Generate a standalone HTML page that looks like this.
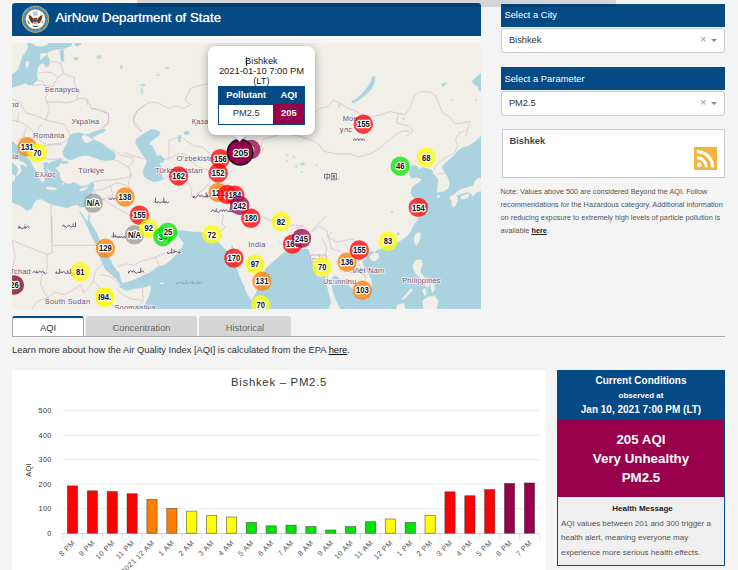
<!DOCTYPE html>
<html><head><meta charset="utf-8">
<style>
*{box-sizing:border-box;margin:0;padding:0}
html,body{width:738px;height:570px;overflow:hidden;background:#f4f4f4;font-family:"Liberation Sans",sans-serif;color:#333}
.abs{position:absolute}
#topbar{left:137px;top:0;width:479px;height:6.7px;background:rgba(0,0,0,.125);z-index:5}
#hdrwrap{left:12px;top:2px;width:469px;height:36px;background:#fff;border-radius:4px 4px 0 0}
#hdr{text-shadow:0 0 .7px rgba(255,255,255,.8);left:12px;top:3px;width:469px;height:33px;background:#044b85;border-radius:3px 3px 0 0;color:#fff;font-size:13.3px;line-height:29px;padding-left:43.5px;white-space:nowrap}
#map{left:12px;top:43px;width:469px;height:266px;background:#f2efe9;overflow:hidden}
.ml{font:bold 8.7px "Liberation Sans",sans-serif;text-anchor:middle;fill:#111;stroke:#fff;stroke-width:2.6px;stroke-linejoin:round;paint-order:stroke}
.lb{font:7.3px "Liberation Sans",sans-serif;letter-spacing:.3px;fill:#6f5079;stroke:#f6f3ef;stroke-width:1.4px;paint-order:stroke;stroke-linejoin:round}
#pop{left:195.7px;top:2.5px;width:107.5px;height:89.5px;background:#fff;border-radius:8px;box-shadow:0 2px 9px rgba(0,0,0,.35);font-size:9.33px;line-height:10.1px;text-align:center;color:#222;padding-top:10.4px}
#tip{left:223.4px;top:87.6px;width:9.2px;height:9.2px;background:#fff;transform:rotate(45deg);box-shadow:2px 2px 4px rgba(0,0,0,.2)}
#tipc{left:210px;top:80px;width:40px;height:12px;background:#fff}
#ptab{left:205.9px;top:43.1px;width:87.3px;height:38.8px;border:1px solid #044b85;background:#fff}
#ptab div{position:absolute;text-align:center;font-size:9.33px}
.ph{left:501.4px;width:223.6px;height:23px;background:#044b85;color:#fff;font-size:9.4px;line-height:23px;padding-left:3px}
.sel{left:501.4px;width:223.6px;height:24.5px;background:#fff;border:1px solid #ccc;border-radius:3px;font-size:9.3px;line-height:23px;padding-left:6.5px;color:#333}
.sel .x{position:absolute;right:17.5px;top:-1.5px;color:#999;font-size:11px}
.sel .c{position:absolute;right:6.5px;top:10px;width:0;height:0;border:3px solid transparent;border-top:3px solid #888}
#city{left:502px;top:129px;width:223px;height:49px;background:#fff;border:1px solid #ccc;font-size:9.3px;font-weight:bold;color:#444;padding:6.2px 0 0 6.5px}
#note{left:500.5px;top:185px;font-size:7.33px;line-height:13.1px;color:#555;white-space:nowrap}
#note b{color:#222;text-decoration:underline}
.tab{top:316px;height:21px;font-size:9.33px;line-height:24px;text-align:center;color:#666;background:#d5d5d5;border-radius:3px 3px 0 0}
#tab1{left:12px;width:72px;background:#fff;color:#333;border:1px solid #aaa;border-top:2px solid #044b85;border-bottom:none;line-height:21px}
#tabline{left:12px;top:336px;width:713px;height:1px;background:#aaa}
#learn{left:12px;top:344.5px;font-size:9.33px;line-height:11px;color:#333;white-space:nowrap}
#chart{left:12px;top:370px;width:534px;height:200px;background:#fff;overflow:hidden}
#cc{left:557px;top:370px;width:168px;height:195.5px;background:#efefef;border:1px solid #044b85;border-top:none}
#cc .h{background:#044b85;color:#fff;text-align:center;font-weight:bold;font-size:10px;line-height:14px;height:50px;padding-top:4px}
#cc .h small{font-size:8px}
#cc .a{background:#99004c;color:#fff;text-align:center;font-weight:bold;font-size:13.33px;line-height:19px;height:76.5px;padding-top:10px}
#cc .m{font-size:8px;color:#555;line-height:14.3px;padding:4.5px 0 0 3px;white-space:nowrap}
#cc .m b{display:block;text-align:center;color:#222;font-size:8px;line-height:16px}
</style></head><body>
<div class="abs" id="hdrwrap"></div>
<div class="abs" id="hdr">AirNow Department of State</div>
<div class="abs" id="topbar"></div>
<svg class="abs" style="left:18px;top:3px" width="36" height="34" viewBox="0 0 604 570">
<circle cx="293" cy="272" r="228" fill="#d9c04a"/>
<circle cx="293" cy="272" r="214" fill="#2f6fb3"/>
<circle cx="293" cy="272" r="196" fill="none" stroke="#8fb3dd" stroke-width="34" stroke-dasharray="14 9" opacity=".75"/>
<circle cx="293" cy="272" r="170" fill="#cdb94f"/>
<circle cx="293" cy="272" r="160" fill="#fff"/>
<circle cx="293" cy="178" r="42" fill="#a9d3ea"/>
<path d="M175 200 L215 215 L250 250 L262 300 L255 345 L225 330 L200 290 L185 245 Z" fill="#6b3a17"/>
<path d="M415 200 L375 215 L340 250 L328 300 L335 345 L365 330 L390 290 L405 245 Z" fill="#6b3a17"/>
<path d="M262 250 L325 250 L335 300 L320 345 L270 345 L255 300 Z" fill="#7a4a22"/>
<path d="M205 178 l12 22 l-18 6 z M383 178 l-12 22 l18 6 z" fill="#d8c23c"/>
<path d="M255 225 L290 238 L330 225 L318 250 L270 250 Z" fill="#e8e0b0"/>
<rect x="266" y="285" width="58" height="28" fill="#2b4f9a"/>
<path d="M266 313 h58 v30 q-29 28 -58 0 z" fill="#ee8f8f"/>
<path d="M155 290 q30 10 50 70 q-40 -10 -50 -70z" fill="#3f8a3a"/>
<path d="M385 305 l45 -10 l-8 22 l12 18 l-40 12z" fill="#b9b9b9"/>
<path d="M245 372 q48 30 96 0 l-6 22 q-42 18 -84 0z" fill="#444"/>
</svg>
<div class="abs" id="map">
<svg width="469" height="266" viewBox="12 43 469 266" style="position:absolute;left:0;top:0">
<rect x="12" y="43" width="469" height="266" fill="#f2efe9"/>
<g fill="#aad3df" stroke="#aad3df" stroke-width="0.6" stroke-linejoin="round">
<polygon points="27.2,43.0 71.8,43.0 71.3,45.7 66.4,47.4 63.1,49.0 55.5,49.5 49.5,51.2 46.8,53.3 47.9,57.1 49.5,59.3 49.5,63.7 47.9,66.4 46.3,67.2 44.6,64.8 43.0,63.1 39.7,64.2 37.6,68.6 36.8,74.6 37.6,80.0 34.3,82.7 32.1,84.9 28.3,84.9 26.1,82.7 21.8,84.3 16.4,86.0 12.0,87.6 12.0,74.6 15.3,72.4 18.5,69.1 20.7,62.6 22.3,57.1 26.1,51.7 28.3,47.4"/>
<polygon points="59.9,50.6 63.1,50.4 63.7,55.0 64.0,60.4 62.9,61.7 61.5,59.3 60.4,55.0"/>
<polygon points="74.6,43.0 81.1,43.0 80.6,44.6 77.3,46.3 75.1,45.2"/>
<polygon points="74.6,57.7 77.3,57.4 77.5,59.3 74.9,59.9"/>
<polygon points="69.1,136.8 73.2,133.6 78.9,132.8 83.8,134.1 88.7,134.4 93.6,131.9 101.0,129.5 105.4,129.5 103.4,132.3 96.9,134.7 92.3,137.2 93.6,140.1 100.2,142.6 108.3,148.3 114.0,152.3 115.7,156.4 113.2,159.7 106.7,160.5 100.2,159.7 93.6,157.2 88.7,155.6 82.2,155.6 77.3,157.2 71.6,159.7 67.5,158.9 63.4,155.6 62.6,151.5 65.1,147.4 67.5,142.6"/>
<polygon points="60.2,161.7 64.2,161.0 68.3,161.7 67.5,163.4 62.6,163.8"/>
<polygon points="12.0,141.5 18.5,146.5 24.0,154.0 30.6,161.6 32.6,166.5 35.5,170.6 36.7,176.4 39.2,178.0 40.4,181.3 42.9,183.0 44.6,181.3 45.0,178.0 47.0,176.4 45.8,173.1 43.7,169.0 44.2,165.7 43.3,163.2 47.4,162.4 49.1,164.4 50.7,162.4 54.9,160.7 61.5,158.7 61.5,161.5 58.2,166.5 56.9,169.8 59.0,172.3 59.8,177.2 61.5,180.5 64.8,183.0 69.7,184.6 72.4,182.7 76.5,183.5 82.2,186.7 88.7,185.1 92.0,181.8 94.0,184.3 92.8,190.8 90.4,197.3 88.7,203.9 86.3,206.3 80.6,207.1 77.3,204.7 72.4,205.5 67.5,208.0 61.0,206.3 52.8,204.7 47.1,202.2 41.4,199.0 36.5,199.8 33.2,203.9 31.6,208.8 26.7,210.4 20.2,205.5 12.0,202.2"/>
<polygon points="147.1,131.9 151.2,129.5 156.9,130.3 160.2,131.9 158.5,136.0 154.4,138.5 150.4,141.7 148.7,144.2 152.0,145.8 155.3,152.3 156.9,156.4 161.0,155.6 164.2,158.9 163.4,162.1 159.3,163.0 161.0,167.0 161.8,173.6 162.6,179.3 159.3,180.9 153.6,181.7 147.9,179.3 143.8,176.0 143.0,171.1 145.5,165.4 147.1,161.3 143.8,156.4 140.6,151.5 138.1,147.4 135.7,143.4 136.5,139.3 140.6,136.0 143.8,133.6"/>
<polygon points="178.6,135.7 180.6,135.2 180.2,141.7 178.9,142.2"/>
<polygon points="183.8,131.9 188.7,131.1 189.1,134.1 184.7,134.7"/>
<polygon points="112.0,152.3 114.0,153.2 114.4,157.2 112.8,159.7 112.0,159.7"/>
<polygon points="144.0,309.0 145.2,304.8 146.9,300.8 148.9,296.7 150.5,292.6 151.3,288.6 150.9,285.3 148.9,285.7 144.8,287.0 140.0,287.8 135.1,288.6 130.2,289.8 126.1,290.6 122.5,288.6 119.6,286.5 120.9,284.9 119.2,282.5 116.4,279.2 112.3,275.6 108.3,271.9 105.0,268.7 102.3,262.5 100.0,257.5 98.7,253.3 97.0,248.3 95.3,243.3 92.8,238.3 90.3,233.3 88.7,229.2 86.7,225.0 84.5,220.0 81.7,215.8 79.5,212.0 80.7,212.0 83.0,215.8 85.7,220.0 87.3,222.0 88.2,220.3 88.8,215.3 90.0,215.3 89.5,220.8 90.7,223.3 92.8,226.7 95.3,230.8 97.8,235.8 99.5,240.0 101.7,244.2 103.7,248.3 106.2,252.5 108.3,256.7 111.2,261.7 113.7,266.7 117.0,270.5 119.4,273.9 120.0,278.0 121.3,281.7 122.5,283.3 126.1,282.5 131.0,280.9 135.9,279.2 140.0,277.2 144.0,275.2 148.9,273.1 153.0,270.7 155.4,268.3 158.7,266.6 165.0,265.0 166.7,263.8 171.5,259.8 176.4,254.9 177.3,251.9 182.2,247.9 183.8,243.0 180.6,238.9 176.5,234.0 170.8,237.2 165.9,238.9 159.3,238.1 154.4,234.0 151.2,232.3 147.9,229.1 143.0,224.2 138.9,220.1 136.5,215.2 142.2,217.7 147.1,221.7 154.4,225.8 161.0,229.1 169.1,229.9 175.7,230.7 183.8,230.7 193.6,232.3 201.0,232.0 207.0,234.0 212.0,237.0 218.3,242.6 219.9,243.8 223.2,247.6 226.5,250.4 229.0,251.0 231.5,248.5 232.3,245.0 233.2,249.0 233.5,255.0 235.0,262.0 236.5,268.2 239.8,278.0 243.8,286.2 247.1,294.4 250.4,299.3 251.7,301.2 253.6,297.6 256.1,292.7 259.0,285.0 262.0,276.0 265.9,268.2 277.3,258.4 283.8,252.7 288.7,251.1 296.0,249.5 303.4,248.7 308.3,249.5 310.0,255.2 311.6,261.7 314.0,266.6 316.9,276.4 321.8,277.2 325.1,275.6 325.9,282.9 327.5,289.5 329.1,296.0 330.8,302.5 328.3,309.0"/>
<polygon points="340.6,309.0 338.1,304.2 334.9,297.6 333.2,291.1 331.6,284.6 332.4,278.0 334.9,275.6 338.1,278.0 343.0,281.3 347.9,284.6 351.2,287.8 353.6,292.7 356.1,297.6 361.0,299.3 365.9,296.0 370.8,289.5 372.4,284.6 371.6,279.7 368.3,273.1 364.2,266.6 362.6,261.7 367.5,256.8 368.3,252.7 372.4,251.1 374.9,254.4 375.7,251.1 378.9,249.5 383.8,247.8 391.0,245.0 399.0,242.0 402.3,239.9 406.4,237.0 409.7,233.7 411.7,229.6 413.8,225.5 417.1,220.6 419.6,217.7 419.0,208.0 416.5,200.2 413.2,196.9 410.8,192.9 411.6,188.8 414.9,184.7 419.8,182.2 422.2,179.0 416.5,177.3 411.6,178.2 410.0,174.9 409.2,170.8 410.8,166.7 414.1,165.1 417.3,166.7 419.0,170.0 422.2,167.6 426.3,168.4 431.0,169.7 432.4,171.0 433.1,174.6 435.9,176.0 438.0,180.2 437.3,185.1 436.6,190.7 438.0,192.8 444.3,191.4 448.6,188.6 450.0,183.7 448.6,178.1 445.0,172.5 442.2,167.6 444.3,164.0 450.7,158.4 456.3,152.8 459.1,150.0 463.0,147.5 468.8,146.0 475.3,141.5 481.0,136.5 481.0,309.0"/>
<polygon points="372.7,76.1 375.1,77.0 374.3,83.0 371.0,89.5 365.3,95.2 358.8,100.1 353.1,103.1 351.4,101.4 357.1,98.5 362.9,92.8 367.8,87.1 371.0,81.4"/>
<polygon points="481.0,73.2 475.3,78.1 472.0,81.4 473.7,83.8 477.7,86.3 479.4,90.3 481.0,91.2"/>
<polygon points="441.8,83.8 446.7,82.7 445.9,84.6 442.6,86.8"/>
<polygon points="252.0,131.0 262.0,128.0 270.0,130.0 270.0,132.0 262.0,131.0 253.0,134.0"/>
<g opacity="0.7"><ellipse cx="287.3" cy="155.3" rx="1.2" ry="0.8"/><ellipse cx="302.5" cy="164" rx="2.2" ry="1.3"/><ellipse cx="296.3" cy="166.7" rx="1.2" ry="0.8"/><ellipse cx="316.7" cy="165.4" rx="0.9" ry="0.7"/><ellipse cx="338" cy="179" rx="1.4" ry="0.9"/><ellipse cx="287" cy="161" rx="1" ry="0.6"/><ellipse cx="294" cy="157" rx="1" ry="0.7"/><ellipse cx="302" cy="172" rx="1" ry="0.7"/><ellipse cx="339.2" cy="106" rx="0.5" ry="2.2"/><ellipse cx="403.5" cy="118.5" rx="0.6" ry="1.4"/><ellipse cx="99" cy="57" rx="2.4" ry="1.6"/><ellipse cx="121.5" cy="67" rx="1" ry="2"/><ellipse cx="143" cy="85" rx="2.5" ry="1"/><ellipse cx="142" cy="91" rx="0.8" ry="3.5"/><ellipse cx="167" cy="68" rx="2.5" ry="0.9"/><ellipse cx="158" cy="75" rx="1.5" ry="0.7"/><ellipse cx="452" cy="100" rx="0.8" ry="0.8"/><ellipse cx="476" cy="100" rx="0.7" ry="1"/><ellipse cx="392" cy="212" rx="1.3" ry="0.9"/><ellipse cx="398" cy="234" rx="1.2" ry="1.6"/><ellipse cx="385" cy="234" rx="1.5" ry="0.8"/></g>
</g>
<g fill="#f2efe9" stroke="#f2efe9" stroke-width="0.4" stroke-linejoin="round">
<polygon points="31.6,43.0 47.9,43.0 47.0,45.0 42.5,46.3 35.9,45.7 32.7,44.1"/>
<polygon points="40.8,53.9 44.6,52.8 46.6,53.9 44.6,56.6 43.0,57.1 41.6,59.5 40.3,59.3 40.5,56.6"/>
<polygon points="26.1,62.0 28.3,61.0 29.4,62.0 28.3,66.4 26.7,67.8 25.9,65.3"/>
<polygon points="81.9,136.3 84.7,134.7 87.4,136.3 90.4,138.1 93.0,139.9 90.0,141.2 86.3,143.2 83.8,141.2 82.5,138.5"/>
<polygon points="12.0,159.8 16.2,159.5 21.1,161.2 24.6,163.3 26.9,165.6 26.0,167.0 23.9,165.1 21.1,164.4 20.1,166.1 20.8,168.6 21.5,170.3 20.4,172.4 19.0,173.8 17.6,176.1 16.4,175.2 17.6,172.4 18.3,169.6 17.3,166.8 15.5,165.1 13.4,163.3 12.0,162.3"/>
<polygon points="12.0,174.9 14.8,175.2 15.2,177.0 14.5,179.4 13.4,181.5 12.0,180.8"/>
<polygon points="46.2,187.5 49.1,186.9 53.2,187.5 56.5,188.1 56.1,189.4 52.4,190.0 48.3,189.4 46.5,188.7"/>
<polygon points="79.8,189.2 83.8,187.9 87.9,186.7 86.3,189.2 83.0,190.8 80.2,190.8"/>
<polygon points="47.4,169.0 49.1,170.6 50.7,173.1 50.1,173.7 48.3,171.6 47.0,169.8"/>
<polygon points="55.7,167.7 57.3,167.3 57.8,168.5 56.1,169.1"/>
<polygon points="62.3,183.4 63.9,182.8 64.1,184.2 62.7,184.6"/>
<polygon points="256.9,296.8 261.0,296.0 263.4,300.9 262.9,306.6 260.2,309.1 257.4,306.6 256.4,300.9"/>
<polygon points="159.8,283.0 163.4,282.8 163.7,283.8 160.2,284.0"/>
<polygon points="454.2,194.2 460.5,189.6 467.5,187.6 473.1,185.8 474.8,181.6 478.1,178.1 481.0,178.1 481.0,191.0 476.6,191.9 473.1,196.3 471.0,193.5 466.8,192.1 462.6,193.5 457.7,194.9"/>
<polygon points="461.2,196.1 468.6,193.8 468.9,196.6 463.3,199.4 460.8,198.5"/>
<polygon points="450.0,196.6 454.2,194.4 457.4,196.3 457.7,200.8 455.6,205.6 453.2,207.6 451.6,204.5 452.1,200.6 450.1,198.9"/>
<polygon points="436.9,196.1 439.4,195.2 439.7,197.1 437.3,197.8"/>
<polygon points="418.5,232.3 420.5,233.1 420.2,238.0 418.2,242.9 416.1,245.4 414.1,242.1 414.4,237.2 416.1,233.9"/>
<polygon points="416.1,260.0 421.0,259.7 422.6,264.1 421.0,268.2 420.2,272.3 422.6,275.5 425.9,278.8 424.2,280.4 419.3,276.7 416.1,273.9 413.6,269.8 412.8,264.9"/>
<polygon points="422.6,300.8 428.3,296.8 434.8,295.9 438.1,300.8 436.5,309.0 423.4,309.0"/>
<polygon points="425.0,282.1 429.1,281.3 429.9,284.5 427.5,287.8 425.4,286.1"/>
<polygon points="430.8,283.7 434.0,282.9 434.8,289.4 432.4,292.7 430.8,288.6"/>
<polygon points="422.6,289.4 425.0,288.6 426.7,293.5 424.7,295.9 423.1,292.7"/>
<polygon points="417.7,278.8 421.8,278.0 422.6,281.3 419.3,282.9"/>
<polygon points="411.2,288.6 412.8,289.7 403.8,299.5 401.9,298.9"/>
<polygon points="397.3,304.9 403.8,303.3 405.5,309.0 396.5,309.0"/>
<polygon points="370.4,255.2 374.0,253.2 378.6,253.9 378.9,257.6 375.7,260.9 371.6,260.4 370.0,257.6"/>
</g>
<g fill="none" stroke="#bfa2c8" stroke-width="0.6" stroke-opacity="0.75" stroke-linejoin="round"><polyline points="63.1,49.5 61.5,56.1 61.0,64.2"/><polyline points="50.6,61.5 55.5,62.0 61.0,64.2 62.6,69.1 63.7,73.5"/><polyline points="37.6,74.0 43.6,72.2 51.2,72.4 57.7,77.3 63.7,73.5"/><polyline points="57.7,77.3 56.6,80.5 53.9,83.3 53.3,86.5"/><polyline points="37.6,80.0 42.5,81.6 44.1,85.4 53.3,86.5"/><polyline points="63.7,73.5 69.7,76.2 74.6,77.8 74.0,83.3 77.3,88.7 80.0,91.4 77.3,95.2 77.3,99.0"/><polyline points="46.8,86.5 47.4,94.1 45.2,97.4 46.8,102.3 57.7,101.8 67.5,102.8 74.0,101.2 77.3,99.0 83.8,98.0 87.1,100.7 87.6,105.0"/><polyline points="32.1,85.2 42.5,84.9 46.8,86.5"/><polyline points="87.1,99.0 91.3,108.3 99.5,110.6 108.8,114.1 107.6,124.6 101.8,129.3"/><polyline points="47.0,101.3 49.3,109.5 45.8,120.0 55.1,122.3 64.5,124.6 69.1,132.8 71.5,136.3"/><polyline points="42.3,123.5 35.3,132.8 40.0,141.0 47.0,144.5 61.0,143.3 69.1,138.6"/><polyline points="40.0,145.6 62.1,144.5"/><polyline points="40.0,157.3 51.7,159.6 61.0,158.5"/><polyline points="12.0,99.0 19.0,101.3 26.0,113.0 35.3,115.3 45.8,120.0"/><polyline points="12.0,120.0 21.3,122.3 28.3,127.0 35.3,132.8"/><polyline points="19.0,113.0 16.7,122.3"/><polyline points="124.0,152.6 137.9,157.3 144.5,158.9"/><polyline points="26.0,127.0 23.7,136.3 30.7,141.0 35.3,132.8"/><polyline points="16.7,141.0 23.7,136.3"/><polyline points="361.0,114.8 370.8,116.5 380.6,114.8 390.4,111.6 398.6,113.2 405.1,114.8 410.0,108.3 414.1,95.2 419.8,91.7 429.6,92.0 435.3,95.2 439.4,105.0 442.6,113.2 449.2,116.5 454.9,123.8 462.2,123.0 469.6,121.4 467.1,131.2 465.5,136.1"/><polyline points="398.6,113.2 396.1,123.0 403.4,124.6 410.0,126.3 413.2,131.2 406.7,136.1"/><polyline points="301.0,136.7 310.8,140.0 318.9,144.1 323.8,151.4 336.9,153.9 350.0,153.9 358.1,157.1 372.0,153.1"/><polyline points="301.0,125.0 308.0,118.0 315.9,111.2 321.6,108.0 329.0,106.3 333.1,99.8 339.6,103.1 347.8,108.6 355.5,110.8 361.0,114.8"/><polyline points="270.2,137.3 262.9,139.8 261.2,145.5 263.7,150.4 259.6,154.5"/><polyline points="270.2,137.3 285.0,133.0 301.0,136.7"/><polyline points="372.0,153.0 380.0,148.0 388.0,141.0 395.0,135.0 402.0,131.0 410.0,131.0"/><polyline points="212.0,83.0 207.1,83.8 196.5,86.3 190.0,88.7 188.3,93.6 185.1,100.1 190.8,105.0 183.4,108.3 175.3,105.9 168.7,108.3 157.3,102.6 149.1,102.6 142.6,106.7 138.5,109.9 135.3,114.8 133.6,121.4 138.5,126.3 141.8,132.0"/><polyline points="92.0,108.3 100.2,109.9 108.3,113.2 109.1,121.4 101.8,127.9"/><polyline points="169.1,158.9 169.1,140.1 180.6,136.8 193.6,145.8 203.4,147.4 210.0,154.0"/><polyline points="164.2,158.9 169.1,158.9 177.3,154.0 183.8,153.2 190.4,160.5 198.5,167.0 208.3,170.3 216.5,176.8"/><polyline points="162.6,179.3 170.8,175.2 180.6,181.7 188.7,183.4 192.0,189.9 190.4,198.1"/><polyline points="112.0,149.1 121.8,155.6 131.6,157.2 133.2,162.1 128.3,167.0 131.6,175.2 128.3,181.7 130.0,189.9"/><polyline points="133.2,118.1 136.5,111.5 144.7,105.0"/><polyline points="133.2,118.1 134.9,126.2 142.2,131.9"/><polyline points="112.0,158.9 118.5,161.3 128.3,167.0"/><polyline points="208.3,170.3 210.0,181.7 203.4,189.9 196.9,194.0"/><polyline points="216.5,176.8 226.3,175.2 232.0,170.3"/><polyline points="223.4,216.0 221.8,222.5 225.1,227.4 220.2,231.5 221.8,238.0"/><polyline points="261.0,216.0 270.8,220.9 283.8,225.8 293.6,225.0 303.4,225.8"/><polyline points="296.9,227.4 303.4,225.8 310.0,232.3 308.3,238.9 303.4,237.2 298.5,234.0 296.9,227.4"/><polyline points="310.0,232.3 316.5,225.8 323.0,219.3 326.3,216.0"/><polyline points="327.1,237.2 332.0,232.3"/><polyline points="336.5,242.1 344.7,240.5 351.2,238.9 361.0,243.8 367.5,248.7"/><polyline points="344.7,243.8 349.6,251.9 357.7,258.4 361.0,269.9 365.9,278.0"/><polyline points="328.3,237.2 331.6,248.7 339.8,251.1 344.7,256.8 354.4,265.0 352.8,273.1"/><polyline points="321.8,237.2 326.7,248.7 325.1,256.8 328.3,265.0 327.5,278.0"/><polyline points="349.6,273.1 361.0,271.5 365.9,278.0 364.2,286.2 357.7,291.1"/><polyline points="312.0,232.3 318.5,225.8 326.7,230.7 328.3,237.2 336.5,242.1"/><polyline points="52.0,216.0 52.0,245.4 52.0,252.7 47.1,254.4 47.1,269.9 41.4,276.4 40.6,284.6 44.7,292.7 47.9,297.6 54.4,291.9 64.2,294.4 74.0,289.5 80.6,284.6 83.8,292.7 88.7,287.8 93.6,281.3 95.3,271.5 103.4,262.5"/><polyline points="52.0,245.4 95.3,245.4"/><polyline points="12.0,240.5 47.1,254.4"/><polyline points="12.0,240.5 15.3,256.8 12.0,269.9"/><polyline points="100.2,274.8 110.0,276.4 116.5,281.3 120.6,287.8"/><polyline points="31.6,309.1 38.1,300.9 47.9,297.6"/><polyline points="93.6,281.3 100.2,287.8 103.4,297.6 110.0,304.2 118.1,307.4"/><polyline points="117.9,266.3 126.0,263.8 134.1,265.4 140.7,261.4 155.3,257.3 168.3,251.6"/><polyline points="155.3,257.3 159.3,266.3"/><polyline points="116.3,287.4 121.1,293.9 130.9,298.8 142.3,300.4"/><polyline points="142.3,287.4 143.1,300.4 137.4,309.0"/><polyline points="86.3,206.3 89.6,214.5"/><polyline points="93.6,190.8 103.4,189.2 110.0,185.9 116.5,182.7 126.3,185.1 132.0,190.8"/><polyline points="103.4,199.0 110.0,203.9 123.0,212.0 132.0,215.3"/><polyline points="93.6,181.8 103.4,180.2 116.5,179.4 126.3,177.8 132.0,174.5"/><polyline points="51.2,204.7 51.2,215.3 52.0,243.1"/><polyline points="88.7,203.9 93.6,202.2 96.9,195.7 93.6,190.8"/><polyline points="110.0,185.9 113.2,195.7 103.4,199.0 93.6,202.2"/><polyline points="433.7,170.8 436.1,165.1 442.6,159.4 449.2,156.1 454.9,152.0 457.3,146.3 455.7,139.0 459.0,133.3 465.5,130.0"/><polyline points="437.7,174.4 445.1,172.8"/></g>
<g text-anchor="middle"><text class="lb" x="62.1" y="91.7">Беларусь</text><text class="lb" x="85.5" y="123.6">Україна</text><text class="lb" x="48.9" y="137.6">România</text><text class="lb" x="91.3" y="172.6">Türkiye</text><text class="lb" x="45.5" y="177">Ελλάς</text><text class="lb" x="14.5" y="106.6">nd</text><text class="lb" x="15.5" y="158.8">ia</text><text class="lb" x="20.5" y="274">Tchad</text><text class="lb" x="67.5" y="303.7">South Sudan</text><text class="lb" x="135" y="309.7">Soomaaliya</text><text class="lb" x="178.9" y="173.1">Türkmenistan</text><text class="lb" x="197.4" y="161.1">O'zbekiston</text><text class="lb" x="210" y="123.8">Қазақстан</text><text class="lb" x="256.9" y="246.6">India</text><text class="lb" x="356" y="120.8">Монгол</text><text class="lb" x="346" y="131.9">улс</text><text class="lb" x="368.3" y="273.2">Việt Nam</text><text class="lb" x="421.5" y="282.5">Philippines</text><text class="lb" x="339.8" y="284.1">Us:ınnlnu</text></g><path d="M29.1,227.9Q27.7,224.5 26.2,227.9L25.0,227.9L25.0,225.9M25.0,227.9L23.7,227.9Q22.1,230.5 20.6,227.3L20.6,227.9L19.2,227.9L19.2,225.9M19.2,227.9L17.8,227.9" fill="none" stroke="#f6f3ef" stroke-width="2.4" stroke-linecap="round" stroke-linejoin="round"/><path d="M29.1,227.9Q27.7,224.5 26.2,227.9L25.0,227.9L25.0,225.9M25.0,227.9L23.7,227.9Q22.1,230.5 20.6,227.3L20.6,227.9L19.2,227.9L19.2,225.9M19.2,227.9L17.8,227.9" fill="none" stroke="#6f5079" stroke-width="1" stroke-linecap="round" stroke-linejoin="round"/><circle cx="25.0" cy="224.3" r="0.45" fill="#6f5079"/><path d="M75.6,226.6M75.6,222.6L75.6,226.6L73.3,226.6M73.3,223.9Q73.0,228.0 70.1,226.6Q68.8,223.2 67.6,226.6Q66.1,229.2 64.7,226.0L64.7,226.6Q63.6,223.2 62.6,226.6" fill="none" stroke="#f6f3ef" stroke-width="2.4" stroke-linecap="round" stroke-linejoin="round"/><path d="M75.6,226.6M75.6,222.6L75.6,226.6L73.3,226.6M73.3,223.9Q73.0,228.0 70.1,226.6Q68.8,223.2 67.6,226.6Q66.1,229.2 64.7,226.0L64.7,226.6Q63.6,223.2 62.6,226.6" fill="none" stroke="#6f5079" stroke-width="1" stroke-linecap="round" stroke-linejoin="round"/><path d="M46.8,272.7Q45.3,275.3 43.9,272.1L43.9,272.7Q42.6,269.3 41.2,272.7Q39.8,269.3 38.3,272.7L36.8,272.7L36.8,270.7M36.8,272.7L35.4,272.7Q34.1,269.3 32.9,272.7" fill="none" stroke="#f6f3ef" stroke-width="2.4" stroke-linecap="round" stroke-linejoin="round"/><path d="M46.8,272.7Q45.3,275.3 43.9,272.1L43.9,272.7Q42.6,269.3 41.2,272.7Q39.8,269.3 38.3,272.7L36.8,272.7L36.8,270.7M36.8,272.7L35.4,272.7Q34.1,269.3 32.9,272.7" fill="none" stroke="#6f5079" stroke-width="1" stroke-linecap="round" stroke-linejoin="round"/><path d="M78.0,273.2Q76.7,275.8 75.4,272.6L75.4,273.2Q74.0,275.8 72.7,272.6L72.7,273.2L71.5,273.2L71.5,271.2M71.5,273.2L70.4,273.2M70.4,269.2L70.4,273.2L67.9,273.2M67.9,270.5Q67.7,274.6 65.4,273.2Q63.8,269.8 62.2,273.2Q61.0,269.8 59.7,273.2M59.7,269.2L59.7,273.2L56.5,273.2Q56.3,269.8 56.0,273.2" fill="none" stroke="#f6f3ef" stroke-width="2.4" stroke-linecap="round" stroke-linejoin="round"/><path d="M78.0,273.2Q76.7,275.8 75.4,272.6L75.4,273.2Q74.0,275.8 72.7,272.6L72.7,273.2L71.5,273.2L71.5,271.2M71.5,273.2L70.4,273.2M70.4,269.2L70.4,273.2L67.9,273.2M67.9,270.5Q67.7,274.6 65.4,273.2Q63.8,269.8 62.2,273.2Q61.0,269.8 59.7,273.2M59.7,269.2L59.7,273.2L56.5,273.2Q56.3,269.8 56.0,273.2" fill="none" stroke="#6f5079" stroke-width="1" stroke-linecap="round" stroke-linejoin="round"/><circle cx="71.5" cy="275.0" r="0.45" fill="#6f5079"/><path d="M143.9,272.3Q142.4,268.9 140.8,272.3M140.8,268.3L140.8,272.3L137.6,272.3Q136.1,274.9 134.6,271.7L134.6,272.3Q133.5,268.9 132.3,272.3Q130.7,268.9 129.0,272.3Q128.8,274.9 128.5,271.7L128.5,272.3" fill="none" stroke="#f6f3ef" stroke-width="2.4" stroke-linecap="round" stroke-linejoin="round"/><path d="M143.9,272.3Q142.4,268.9 140.8,272.3M140.8,268.3L140.8,272.3L137.6,272.3Q136.1,274.9 134.6,271.7L134.6,272.3Q133.5,268.9 132.3,272.3Q130.7,268.9 129.0,272.3Q128.8,274.9 128.5,271.7L128.5,272.3" fill="none" stroke="#6f5079" stroke-width="1" stroke-linecap="round" stroke-linejoin="round"/><path d="M180.5,252.8L179.1,252.8L179.1,250.8M179.1,252.8L177.7,252.8Q176.0,249.4 174.4,252.8M174.4,250.1Q174.1,254.2 171.8,252.8M171.8,248.8L171.8,252.8L169.2,252.8Q168.4,255.4 167.5,252.2L167.5,252.8" fill="none" stroke="#f6f3ef" stroke-width="2.4" stroke-linecap="round" stroke-linejoin="round"/><path d="M180.5,252.8L179.1,252.8L179.1,250.8M179.1,252.8L177.7,252.8Q176.0,249.4 174.4,252.8M174.4,250.1Q174.1,254.2 171.8,252.8M171.8,248.8L171.8,252.8L169.2,252.8Q168.4,255.4 167.5,252.2L167.5,252.8" fill="none" stroke="#6f5079" stroke-width="1" stroke-linecap="round" stroke-linejoin="round"/><circle cx="179.1" cy="249.2" r="0.45" fill="#6f5079"/><path d="M135.8,236.8M135.8,234.1Q135.5,238.2 132.5,236.8Q131.0,239.4 129.5,236.2L129.5,236.8L127.9,236.8L127.9,234.8M127.9,236.8L126.3,236.8Q125.2,239.4 124.1,236.2L124.1,236.8Q122.7,239.4 121.3,236.2L121.3,236.8Q120.2,239.4 119.0,236.2L119.0,236.8Q117.9,239.4 116.8,236.2L116.8,236.8L115.1,236.8L115.1,234.8M115.1,236.8L113.4,236.8M113.4,232.8L113.4,236.8L111.8,236.8" fill="none" stroke="#f6f3ef" stroke-width="2.4" stroke-linecap="round" stroke-linejoin="round"/><path d="M135.8,236.8M135.8,234.1Q135.5,238.2 132.5,236.8Q131.0,239.4 129.5,236.2L129.5,236.8L127.9,236.8L127.9,234.8M127.9,236.8L126.3,236.8Q125.2,239.4 124.1,236.2L124.1,236.8Q122.7,239.4 121.3,236.2L121.3,236.8Q120.2,239.4 119.0,236.2L119.0,236.8Q117.9,239.4 116.8,236.2L116.8,236.8L115.1,236.8L115.1,234.8M115.1,236.8L113.4,236.8M113.4,232.8L113.4,236.8L111.8,236.8" fill="none" stroke="#6f5079" stroke-width="1" stroke-linecap="round" stroke-linejoin="round"/><circle cx="127.9" cy="238.6" r="0.45" fill="#6f5079"/><path d="M168.8,202.0Q167.5,204.6 166.2,201.4L166.2,202.0Q165.0,204.6 163.8,201.4L163.8,202.0M163.8,198.0L163.8,202.0L161.5,202.0Q159.9,204.6 158.3,201.4L158.3,202.0Q157.0,204.6 155.6,201.4L155.6,202.0M155.6,198.0L155.6,202.0L154.8,202.0" fill="none" stroke="#f6f3ef" stroke-width="2.4" stroke-linecap="round" stroke-linejoin="round"/><path d="M168.8,202.0Q167.5,204.6 166.2,201.4L166.2,202.0Q165.0,204.6 163.8,201.4L163.8,202.0M163.8,198.0L163.8,202.0L161.5,202.0Q159.9,204.6 158.3,201.4L158.3,202.0Q157.0,204.6 155.6,201.4L155.6,202.0M155.6,198.0L155.6,202.0L154.8,202.0" fill="none" stroke="#6f5079" stroke-width="1" stroke-linecap="round" stroke-linejoin="round"/><path d="M220.0,196.8Q218.5,193.4 217.1,196.8Q215.9,193.4 214.7,196.8M214.7,192.8L214.7,196.8L212.1,196.8Q210.5,193.4 208.8,196.8L207.5,196.8L207.5,194.8M207.5,196.8L206.2,196.8M206.2,192.8L206.2,196.8L203.1,196.8Q201.6,193.4 200.1,196.8Q198.4,193.4 196.8,196.8Q195.6,199.4 194.4,196.2L194.4,196.8Q193.7,199.4 193.0,196.2L193.0,196.8" fill="none" stroke="#f6f3ef" stroke-width="2.4" stroke-linecap="round" stroke-linejoin="round"/><path d="M220.0,196.8Q218.5,193.4 217.1,196.8Q215.9,193.4 214.7,196.8M214.7,192.8L214.7,196.8L212.1,196.8Q210.5,193.4 208.8,196.8L207.5,196.8L207.5,194.8M207.5,196.8L206.2,196.8M206.2,192.8L206.2,196.8L203.1,196.8Q201.6,193.4 200.1,196.8Q198.4,193.4 196.8,196.8Q195.6,199.4 194.4,196.2L194.4,196.8Q193.7,199.4 193.0,196.2L193.0,196.8" fill="none" stroke="#6f5079" stroke-width="1" stroke-linecap="round" stroke-linejoin="round"/><path d="M233.0,211.5M233.0,207.5L233.0,211.5L230.3,211.5M230.3,207.5L230.3,211.5L227.8,211.5Q226.2,208.1 224.6,211.5Q223.5,208.1 222.4,211.5Q221.1,208.1 219.8,211.5Q218.1,214.1 216.5,210.9L216.5,211.5M216.5,208.8Q216.2,212.9 214.2,211.5Q212.8,208.1 211.3,211.5" fill="none" stroke="#f6f3ef" stroke-width="2.4" stroke-linecap="round" stroke-linejoin="round"/><path d="M233.0,211.5M233.0,207.5L233.0,211.5L230.3,211.5M230.3,207.5L230.3,211.5L227.8,211.5Q226.2,208.1 224.6,211.5Q223.5,208.1 222.4,211.5Q221.1,208.1 219.8,211.5Q218.1,214.1 216.5,210.9L216.5,211.5M216.5,208.8Q216.2,212.9 214.2,211.5Q212.8,208.1 211.3,211.5" fill="none" stroke="#6f5079" stroke-width="1" stroke-linecap="round" stroke-linejoin="round"/><path d="M125.0,199.7Q123.4,196.3 121.8,199.7Q120.4,196.3 119.0,199.7Q117.8,202.3 116.6,199.1L116.6,199.7Q115.1,196.3 113.6,199.7Q112.5,196.3 111.3,199.7Q110.2,196.3 109.0,199.7" fill="none" stroke="#f6f3ef" stroke-width="2.4" stroke-linecap="round" stroke-linejoin="round"/><path d="M125.0,199.7Q123.4,196.3 121.8,199.7Q120.4,196.3 119.0,199.7Q117.8,202.3 116.6,199.1L116.6,199.7Q115.1,196.3 113.6,199.7Q112.5,196.3 111.3,199.7Q110.2,196.3 109.0,199.7" fill="none" stroke="#6f5079" stroke-width="1" stroke-linecap="round" stroke-linejoin="round"/><path d="M324.5,259.6Q323.2,256.2 322.0,259.6M322.0,256.9Q321.7,261.0 319.6,259.6M319.6,255.6L319.6,259.6L316.2,259.6Q314.9,256.2 313.7,259.6Q313.1,256.2 312.5,259.6" fill="none" stroke="#f6f3ef" stroke-width="2.4" stroke-linecap="round" stroke-linejoin="round"/><path d="M324.5,259.6Q323.2,256.2 322.0,259.6M322.0,256.9Q321.7,261.0 319.6,259.6M319.6,255.6L319.6,259.6L316.2,259.6Q314.9,256.2 313.7,259.6Q313.1,256.2 312.5,259.6" fill="none" stroke="#6f5079" stroke-width="1" stroke-linecap="round" stroke-linejoin="round"/><path d="M364.5,140.4Q363.2,137.0 362.0,140.4Q360.5,137.0 359.0,140.4Q357.3,137.0 355.7,140.4Q354.6,137.0 353.5,140.4" fill="none" stroke="#f6f3ef" stroke-width="2.4" stroke-linecap="round" stroke-linejoin="round"/><path d="M364.5,140.4Q363.2,137.0 362.0,140.4Q360.5,137.0 359.0,140.4Q357.3,137.0 355.7,140.4Q354.6,137.0 353.5,140.4" fill="none" stroke="#6f5079" stroke-width="1" stroke-linecap="round" stroke-linejoin="round"/><path d="M202.4,283.3Q201.1,279.9 199.9,283.3L198.3,283.3L198.3,281.3M198.3,283.3L196.6,283.3Q195.3,285.9 194.0,282.7L194.0,283.3L192.8,283.3L192.8,281.3M192.8,283.3L191.6,283.3Q190.3,279.9 188.9,283.3Q187.6,285.9 186.4,282.7L186.4,283.3M186.4,280.6Q186.1,284.7 183.8,283.3L182.3,283.3L182.3,281.3M182.3,283.3L180.8,283.3Q179.5,279.9 178.1,283.3Q177.3,285.9 176.4,282.7L176.4,283.3" fill="none" stroke="#8c9cc4" stroke-width="0.7" stroke-linecap="round" stroke-linejoin="round"/><rect x="310.8" y="255" width="15.6" height="6.8" rx="1" fill="#f6f3ef" fill-opacity="0.6" stroke="#9a7fa6" stroke-width="0.5"/><g fill="none" stroke="#6f5079" stroke-width="0.7"><rect x="324.6" y="174.6" width="4.8" height="3.4"/><path d="M327,172.8V180.4"/><rect x="331.2" y="173.4" width="5.4" height="6.4"/><path d="M332.4,175.2H335.4M332.4,176.7H335.4M332.4,178.2H335.4M333.9,175.2V178.2"/></g>
<g><circle cx="27.2" cy="146.8" r="9.7" fill="#ff7e00" fill-opacity="0.75"/><circle cx="37.3" cy="152.7" r="9.7" fill="#ffff00" fill-opacity="0.75"/><text transform="translate(37.3,155.79999999999998) scale(0.88,1)" class="ml">70</text><text transform="translate(27.2,149.9) scale(0.88,1)" class="ml">131</text><circle cx="93.3" cy="203.1" r="9.7" fill="#9a9a9a" fill-opacity="0.75"/><text transform="translate(93.3,206.2) scale(0.88,1)" class="ml">N/A</text><circle cx="125" cy="197" r="9.7" fill="#ff7e00" fill-opacity="0.75"/><text transform="translate(125,200.1) scale(0.88,1)" class="ml">138</text><circle cx="134.5" cy="234.8" r="9.7" fill="#9a9a9a" fill-opacity="0.75"/><text transform="translate(134.5,237.9) scale(0.88,1)" class="ml">N/A</text><circle cx="139.4" cy="215.2" r="9.7" fill="#ff0000" fill-opacity="0.75"/><text transform="translate(139.4,218.29999999999998) scale(0.88,1)" class="ml">155</text><circle cx="148.7" cy="228.3" r="9.7" fill="#ffff00" fill-opacity="0.75"/><text transform="translate(148.7,231.4) scale(0.88,1)" class="ml">92</text><circle cx="162.9" cy="236.7" r="9.7" fill="#00e400" fill-opacity="0.75"/><text transform="translate(162.9,239.79999999999998) scale(0.88,1)" class="ml">34</text><circle cx="167.9" cy="232.2" r="9.7" fill="#00e400" fill-opacity="0.75"/><text transform="translate(167.9,235.29999999999998) scale(0.88,1)" class="ml">25</text><circle cx="211.7" cy="234.4" r="9.7" fill="#ffff00" fill-opacity="0.75"/><text transform="translate(211.7,237.5) scale(0.88,1)" class="ml">72</text><circle cx="105.4" cy="248.3" r="9.7" fill="#ff7e00" fill-opacity="0.75"/><text transform="translate(105.4,251.4) scale(0.88,1)" class="ml">129</text><circle cx="80.2" cy="271.8" r="9.7" fill="#ffff00" fill-opacity="0.75"/><text transform="translate(80.2,274.90000000000003) scale(0.88,1)" class="ml">81</text><circle cx="14.4" cy="285" r="9.7" fill="#7e0023" fill-opacity="0.75"/><text transform="translate(14.4,288.1) scale(0.88,1)" class="ml">26</text><circle cx="104.7" cy="297.1" r="9.7" fill="#ffff00" fill-opacity="0.75"/><circle cx="104.7" cy="297.1" r="9.7" fill="#ffff00" fill-opacity="0.75"/><text transform="translate(104.7,300.20000000000005) scale(0.88,1)" class="ml">I94.</text><circle cx="178.6" cy="176" r="9.7" fill="#ff0000" fill-opacity="0.75"/><text transform="translate(178.6,179.1) scale(0.88,1)" class="ml">162</text><circle cx="220.3" cy="158.7" r="9.7" fill="#ff0000" fill-opacity="0.75"/><text transform="translate(220.3,161.79999999999998) scale(0.88,1)" class="ml">156</text><circle cx="218.2" cy="173" r="9.7" fill="#ff0000" fill-opacity="0.75"/><text transform="translate(218.2,176.1) scale(0.88,1)" class="ml">152</text><circle cx="218.1" cy="192.5" r="9.7" fill="#ff7e00" fill-opacity="0.75"/><text transform="translate(218.1,195.6) scale(0.88,1)" class="ml">121</text><circle cx="227.1" cy="194.5" r="9.7" fill="#ff0000" fill-opacity="0.75"/><text transform="translate(227.1,197.6) scale(0.88,1)" class="ml">1</text><circle cx="234.8" cy="195.3" r="9.7" fill="#ff0000" fill-opacity="0.75"/><text transform="translate(234.8,198.4) scale(0.88,1)" class="ml">184</text><circle cx="239.7" cy="205.4" r="9.7" fill="#99004c" fill-opacity="0.75"/><text transform="translate(239.7,208.5) scale(0.88,1)" class="ml">242</text><circle cx="250.8" cy="218.3" r="9.7" fill="#ff0000" fill-opacity="0.75"/><text transform="translate(250.8,221.4) scale(0.88,1)" class="ml">180</text><circle cx="281" cy="221.5" r="9.7" fill="#ffff00" fill-opacity="0.75"/><text transform="translate(281,224.6) scale(0.88,1)" class="ml">82</text><circle cx="292.5" cy="244.1" r="9.7" fill="#ff0000" fill-opacity="0.75"/><text transform="translate(292.5,247.2) scale(0.88,1)" class="ml">167</text><circle cx="301.5" cy="238.4" r="9.7" fill="#99004c" fill-opacity="0.75"/><text transform="translate(301.5,241.5) scale(0.88,1)" class="ml">245</text><circle cx="233.9" cy="258.1" r="9.7" fill="#ff0000" fill-opacity="0.75"/><text transform="translate(233.9,261.20000000000005) scale(0.88,1)" class="ml">170</text><circle cx="254.9" cy="264.3" r="9.7" fill="#ffff00" fill-opacity="0.75"/><text transform="translate(254.9,267.40000000000003) scale(0.88,1)" class="ml">97</text><circle cx="262" cy="281.3" r="9.7" fill="#ff7e00" fill-opacity="0.75"/><text transform="translate(262,284.40000000000003) scale(0.88,1)" class="ml">131</text><circle cx="322.2" cy="266.9" r="9.7" fill="#ffff00" fill-opacity="0.75"/><text transform="translate(322.2,270.0) scale(0.88,1)" class="ml">70</text><circle cx="260.7" cy="305" r="9.7" fill="#ffff00" fill-opacity="0.75"/><text transform="translate(260.7,308.1) scale(0.88,1)" class="ml">70</text><circle cx="387.9" cy="241.3" r="9.7" fill="#ffff00" fill-opacity="0.75"/><text transform="translate(387.9,244.4) scale(0.88,1)" class="ml">83</text><circle cx="347.1" cy="262.2" r="9.7" fill="#ff7e00" fill-opacity="0.75"/><text transform="translate(347.1,265.3) scale(0.88,1)" class="ml">136</text><circle cx="359.3" cy="250" r="9.7" fill="#ff0000" fill-opacity="0.75"/><text transform="translate(359.3,253.1) scale(0.88,1)" class="ml">155</text><circle cx="362.3" cy="290.3" r="9.7" fill="#ff7e00" fill-opacity="0.75"/><text transform="translate(362.3,293.40000000000003) scale(0.88,1)" class="ml">103</text><circle cx="400.2" cy="166.2" r="9.7" fill="#00e400" fill-opacity="0.75"/><text transform="translate(400.2,169.29999999999998) scale(0.88,1)" class="ml">46</text><circle cx="426.3" cy="157.4" r="9.7" fill="#ffff00" fill-opacity="0.75"/><text transform="translate(426.3,160.5) scale(0.88,1)" class="ml">68</text><circle cx="418.3" cy="207.4" r="9.7" fill="#ff0000" fill-opacity="0.75"/><text transform="translate(418.3,210.5) scale(0.88,1)" class="ml">154</text><circle cx="363.3" cy="124.2" r="9.7" fill="#ff0000" fill-opacity="0.75"/><text transform="translate(363.3,127.3) scale(0.88,1)" class="ml">155</text><circle cx="250.9" cy="149.4" r="9.7" fill="#99004c" fill-opacity="0.75"/><text transform="translate(250.9,152.5) scale(0.88,1)" class="ml">9</text><circle cx="240.15" cy="152.25" r="12.7" fill="#99004c" stroke="#111" stroke-width="1.6"/><text transform="translate(240.9,155.7) scale(0.9,1)" class="ml" style="font-size:9.7px">205</text></g></svg>
<div class="abs" id="tip"></div>
<div class="abs" id="pop">Bishkek<br>2021-01-10 7:00 PM<br>(LT)</div>
<div class="abs" id="tipc"></div>
<div class="abs" id="ptab">
 <div style="left:0;top:0;width:100%;height:18.4px;background:#044b85"></div>
 <div style="left:0;top:0;width:54.5px;line-height:17px;color:#fff;font-weight:bold">Pollutant</div>
 <div style="left:54.5px;top:0;width:30.8px;line-height:17px;color:#fff;font-weight:bold">AQI</div>
 <div style="left:0;top:17.4px;width:54.5px;line-height:19.4px;color:#333">PM2.5</div>
 <div style="left:54.5px;top:17.4px;width:30.8px;height:19.4px;line-height:19.4px;color:#fff;font-weight:bold;background:#99004c">205</div>
</div>
<div class="abs" style="left:233.6px;top:13.5px;width:0.8px;height:9px;background:#222"></div>
</div>

<div class="abs ph" style="top:4px;line-height:21px">Select a City</div>
<div class="abs sel" style="top:28px">Bishkek<span class="x">×</span><span class="c"></span></div>
<div class="abs ph" style="top:67px">Select a Parameter</div>
<div class="abs sel" style="top:91px">PM2.5<span class="x">×</span><span class="c"></span></div>
<div class="abs" id="city">Bishkek</div>
<svg class="abs" style="left:694px;top:146.8px" width="23.1" height="23.1" viewBox="0 0 365 365">
<rect width="365" height="365" fill="#f2b43e"/>
<circle cx="83" cy="284" r="38" fill="#fff"/>
<path d="M45 170 A152 152 0 0 1 197 322" fill="none" stroke="#fff" stroke-width="46"/>
<path d="M45 72 A250 250 0 0 1 295 322" fill="none" stroke="#fff" stroke-width="50"/>
</svg>
<div class="abs" id="note">Note: Values above 500 are considered Beyond the AQI. Follow<br>recommendations for the Hazardous category. Additional information<br>on reducing exposure to extremely high levels of particle pollution is<br>available <b>here</b>.</div>

<div class="abs tab" id="tab1">AQI</div>
<div class="abs tab" style="left:86px;width:111px">Concentration</div>
<div class="abs tab" style="left:199px;width:92px">Historical</div>
<div class="abs" id="tabline"></div>
<div class="abs" id="learn">Learn more about how the Air Quality Index [AQI] is calculated from the EPA <u style="color:#111">here</u>.</div>
<div class="abs" id="chart">
<svg width="534" height="200" viewBox="12 370 534 200" style="position:absolute;left:0;top:0" font-family="Liberation Sans, sans-serif">
<line x1="62.6" x2="539.4" y1="410.70" y2="410.70" stroke="#e6e6e6" stroke-width="0.8"/>
<text x="51.5" y="413.00" text-anchor="end" font-size="7.2" fill="#333" letter-spacing="0.3">500</text>
<line x1="62.6" x2="539.4" y1="435.20" y2="435.20" stroke="#e6e6e6" stroke-width="0.8"/>
<text x="51.5" y="437.50" text-anchor="end" font-size="7.2" fill="#333" letter-spacing="0.3">400</text>
<line x1="62.6" x2="539.4" y1="459.70" y2="459.70" stroke="#e6e6e6" stroke-width="0.8"/>
<text x="51.5" y="462.00" text-anchor="end" font-size="7.2" fill="#333" letter-spacing="0.3">300</text>
<line x1="62.6" x2="539.4" y1="484.20" y2="484.20" stroke="#e6e6e6" stroke-width="0.8"/>
<text x="51.5" y="486.50" text-anchor="end" font-size="7.2" fill="#333" letter-spacing="0.3">200</text>
<line x1="62.6" x2="539.4" y1="508.70" y2="508.70" stroke="#e6e6e6" stroke-width="0.8"/>
<text x="51.5" y="511.00" text-anchor="end" font-size="7.2" fill="#333" letter-spacing="0.3">100</text>
<text x="51.5" y="535.50" text-anchor="end" font-size="7.2" fill="#333" letter-spacing="0.3">0</text>
<line x1="62.6" x2="539.4" y1="533.5" y2="533.5" stroke="#c0d0e0" stroke-width="0.8"/>
<line x1="62.60" x2="62.60" y1="533.2" y2="539.2" stroke="#c0d0e0" stroke-width="0.7"/>
<line x1="82.47" x2="82.47" y1="533.2" y2="539.2" stroke="#c0d0e0" stroke-width="0.7"/>
<line x1="102.33" x2="102.33" y1="533.2" y2="539.2" stroke="#c0d0e0" stroke-width="0.7"/>
<line x1="122.20" x2="122.20" y1="533.2" y2="539.2" stroke="#c0d0e0" stroke-width="0.7"/>
<line x1="142.07" x2="142.07" y1="533.2" y2="539.2" stroke="#c0d0e0" stroke-width="0.7"/>
<line x1="161.93" x2="161.93" y1="533.2" y2="539.2" stroke="#c0d0e0" stroke-width="0.7"/>
<line x1="181.80" x2="181.80" y1="533.2" y2="539.2" stroke="#c0d0e0" stroke-width="0.7"/>
<line x1="201.67" x2="201.67" y1="533.2" y2="539.2" stroke="#c0d0e0" stroke-width="0.7"/>
<line x1="221.53" x2="221.53" y1="533.2" y2="539.2" stroke="#c0d0e0" stroke-width="0.7"/>
<line x1="241.40" x2="241.40" y1="533.2" y2="539.2" stroke="#c0d0e0" stroke-width="0.7"/>
<line x1="261.27" x2="261.27" y1="533.2" y2="539.2" stroke="#c0d0e0" stroke-width="0.7"/>
<line x1="281.13" x2="281.13" y1="533.2" y2="539.2" stroke="#c0d0e0" stroke-width="0.7"/>
<line x1="301.00" x2="301.00" y1="533.2" y2="539.2" stroke="#c0d0e0" stroke-width="0.7"/>
<line x1="320.87" x2="320.87" y1="533.2" y2="539.2" stroke="#c0d0e0" stroke-width="0.7"/>
<line x1="340.73" x2="340.73" y1="533.2" y2="539.2" stroke="#c0d0e0" stroke-width="0.7"/>
<line x1="360.60" x2="360.60" y1="533.2" y2="539.2" stroke="#c0d0e0" stroke-width="0.7"/>
<line x1="380.47" x2="380.47" y1="533.2" y2="539.2" stroke="#c0d0e0" stroke-width="0.7"/>
<line x1="400.33" x2="400.33" y1="533.2" y2="539.2" stroke="#c0d0e0" stroke-width="0.7"/>
<line x1="420.20" x2="420.20" y1="533.2" y2="539.2" stroke="#c0d0e0" stroke-width="0.7"/>
<line x1="440.07" x2="440.07" y1="533.2" y2="539.2" stroke="#c0d0e0" stroke-width="0.7"/>
<line x1="459.93" x2="459.93" y1="533.2" y2="539.2" stroke="#c0d0e0" stroke-width="0.7"/>
<line x1="479.80" x2="479.80" y1="533.2" y2="539.2" stroke="#c0d0e0" stroke-width="0.7"/>
<line x1="499.67" x2="499.67" y1="533.2" y2="539.2" stroke="#c0d0e0" stroke-width="0.7"/>
<line x1="519.53" x2="519.53" y1="533.2" y2="539.2" stroke="#c0d0e0" stroke-width="0.7"/>
<line x1="539.40" x2="539.40" y1="533.2" y2="539.2" stroke="#c0d0e0" stroke-width="0.7"/>
<rect x="67.43" y="485.92" width="10.2" height="47.28" fill="#ff0000" stroke="#333" stroke-opacity="0.7" stroke-width="0.7"/>
<text transform="translate(75.33,543.40) rotate(-45)" text-anchor="end" font-size="7.4" fill="#555" letter-spacing="0.4">8 PM</text>
<rect x="87.30" y="490.82" width="10.2" height="42.38" fill="#ff0000" stroke="#333" stroke-opacity="0.7" stroke-width="0.7"/>
<text transform="translate(95.20,543.40) rotate(-45)" text-anchor="end" font-size="7.4" fill="#555" letter-spacing="0.4">9 PM</text>
<rect x="107.17" y="491.55" width="10.2" height="41.65" fill="#ff0000" stroke="#333" stroke-opacity="0.7" stroke-width="0.7"/>
<text transform="translate(115.07,543.40) rotate(-45)" text-anchor="end" font-size="7.4" fill="#555" letter-spacing="0.4">10 PM</text>
<rect x="127.03" y="493.76" width="10.2" height="39.44" fill="#ff0000" stroke="#333" stroke-opacity="0.7" stroke-width="0.7"/>
<text transform="translate(134.93,543.40) rotate(-45)" text-anchor="end" font-size="7.4" fill="#555" letter-spacing="0.4">11 PM</text>
<rect x="146.90" y="499.39" width="10.2" height="33.81" fill="#ff7e00" stroke="#333" stroke-opacity="0.7" stroke-width="0.7"/>
<text transform="translate(154.80,543.40) rotate(-45)" text-anchor="end" font-size="7.4" fill="#555" letter-spacing="0.4">2021 12 AM</text>
<rect x="166.77" y="508.46" width="10.2" height="24.75" fill="#ff7e00" stroke="#333" stroke-opacity="0.7" stroke-width="0.7"/>
<text transform="translate(174.67,543.40) rotate(-45)" text-anchor="end" font-size="7.4" fill="#555" letter-spacing="0.4">1 AM</text>
<rect x="186.63" y="511.15" width="10.2" height="22.05" fill="#ffff00" stroke="#333" stroke-opacity="0.7" stroke-width="0.7"/>
<text transform="translate(194.53,543.40) rotate(-45)" text-anchor="end" font-size="7.4" fill="#555" letter-spacing="0.4">2 AM</text>
<rect x="206.50" y="515.32" width="10.2" height="17.88" fill="#ffff00" stroke="#333" stroke-opacity="0.7" stroke-width="0.7"/>
<text transform="translate(214.40,543.40) rotate(-45)" text-anchor="end" font-size="7.4" fill="#555" letter-spacing="0.4">3 AM</text>
<rect x="226.37" y="517.03" width="10.2" height="16.17" fill="#ffff00" stroke="#333" stroke-opacity="0.7" stroke-width="0.7"/>
<text transform="translate(234.27,543.40) rotate(-45)" text-anchor="end" font-size="7.4" fill="#555" letter-spacing="0.4">4 AM</text>
<rect x="246.23" y="522.42" width="10.2" height="10.78" fill="#00e400" stroke="#333" stroke-opacity="0.7" stroke-width="0.7"/>
<text transform="translate(254.13,543.40) rotate(-45)" text-anchor="end" font-size="7.4" fill="#555" letter-spacing="0.4">5 AM</text>
<rect x="266.10" y="525.85" width="10.2" height="7.35" fill="#00e400" stroke="#333" stroke-opacity="0.7" stroke-width="0.7"/>
<text transform="translate(274.00,543.40) rotate(-45)" text-anchor="end" font-size="7.4" fill="#555" letter-spacing="0.4">6 AM</text>
<rect x="285.97" y="525.12" width="10.2" height="8.09" fill="#00e400" stroke="#333" stroke-opacity="0.7" stroke-width="0.7"/>
<text transform="translate(293.87,543.40) rotate(-45)" text-anchor="end" font-size="7.4" fill="#555" letter-spacing="0.4">7 AM</text>
<rect x="305.83" y="526.59" width="10.2" height="6.62" fill="#00e400" stroke="#333" stroke-opacity="0.7" stroke-width="0.7"/>
<text transform="translate(313.73,543.40) rotate(-45)" text-anchor="end" font-size="7.4" fill="#555" letter-spacing="0.4">8 AM</text>
<rect x="325.70" y="530.02" width="10.2" height="3.18" fill="#00e400" stroke="#333" stroke-opacity="0.7" stroke-width="0.7"/>
<text transform="translate(333.60,543.40) rotate(-45)" text-anchor="end" font-size="7.4" fill="#555" letter-spacing="0.4">9 AM</text>
<rect x="345.57" y="526.59" width="10.2" height="6.62" fill="#00e400" stroke="#333" stroke-opacity="0.7" stroke-width="0.7"/>
<text transform="translate(353.47,543.40) rotate(-45)" text-anchor="end" font-size="7.4" fill="#555" letter-spacing="0.4">10 AM</text>
<rect x="365.43" y="521.69" width="10.2" height="11.51" fill="#00e400" stroke="#333" stroke-opacity="0.7" stroke-width="0.7"/>
<text transform="translate(373.33,543.40) rotate(-45)" text-anchor="end" font-size="7.4" fill="#555" letter-spacing="0.4">11 AM</text>
<rect x="385.30" y="518.99" width="10.2" height="14.21" fill="#ffff00" stroke="#333" stroke-opacity="0.7" stroke-width="0.7"/>
<text transform="translate(393.20,543.40) rotate(-45)" text-anchor="end" font-size="7.4" fill="#555" letter-spacing="0.4">12 PM</text>
<rect x="405.17" y="522.42" width="10.2" height="10.78" fill="#00e400" stroke="#333" stroke-opacity="0.7" stroke-width="0.7"/>
<text transform="translate(413.07,543.40) rotate(-45)" text-anchor="end" font-size="7.4" fill="#555" letter-spacing="0.4">1 PM</text>
<rect x="425.03" y="515.32" width="10.2" height="17.88" fill="#ffff00" stroke="#333" stroke-opacity="0.7" stroke-width="0.7"/>
<text transform="translate(432.93,543.40) rotate(-45)" text-anchor="end" font-size="7.4" fill="#555" letter-spacing="0.4">2 PM</text>
<rect x="444.90" y="491.80" width="10.2" height="41.40" fill="#ff0000" stroke="#333" stroke-opacity="0.7" stroke-width="0.7"/>
<text transform="translate(452.80,543.40) rotate(-45)" text-anchor="end" font-size="7.4" fill="#555" letter-spacing="0.4">3 PM</text>
<rect x="464.77" y="495.72" width="10.2" height="37.49" fill="#ff0000" stroke="#333" stroke-opacity="0.7" stroke-width="0.7"/>
<text transform="translate(472.67,543.40) rotate(-45)" text-anchor="end" font-size="7.4" fill="#555" letter-spacing="0.4">4 PM</text>
<rect x="484.63" y="489.59" width="10.2" height="43.61" fill="#ff0000" stroke="#333" stroke-opacity="0.7" stroke-width="0.7"/>
<text transform="translate(492.53,543.40) rotate(-45)" text-anchor="end" font-size="7.4" fill="#555" letter-spacing="0.4">5 PM</text>
<rect x="504.50" y="483.47" width="10.2" height="49.74" fill="#99004c" stroke="#333" stroke-opacity="0.7" stroke-width="0.7"/>
<text transform="translate(512.40,543.40) rotate(-45)" text-anchor="end" font-size="7.4" fill="#555" letter-spacing="0.4">6 PM</text>
<rect x="524.37" y="482.98" width="10.2" height="50.23" fill="#99004c" stroke="#333" stroke-opacity="0.7" stroke-width="0.7"/>
<text transform="translate(532.27,543.40) rotate(-45)" text-anchor="end" font-size="7.4" fill="#555" letter-spacing="0.4">7 PM</text>
<text transform="translate(31.2,470) rotate(-90)" text-anchor="middle" font-size="7.4" fill="#333" letter-spacing="0.3">AQI</text>
<text x="279" y="386" text-anchor="middle" font-size="11.3" fill="#333" letter-spacing="0.75">Bishkek – PM2.5</text>
</svg>
</div>
<div class="abs" id="cc">
 <div class="h">Current Conditions<br><small>observed at</small><br>Jan 10, 2021 7:00 PM (LT)</div>
 <div class="a">205 AQI<br>Very Unhealthy<br>PM2.5</div>
 <div class="m"><b>Health Message</b>AQI values between 201 and 300 trigger a<br>health alert, meaning everyone may<br>experience more serious health effects.</div>
</div>
</body></html>
